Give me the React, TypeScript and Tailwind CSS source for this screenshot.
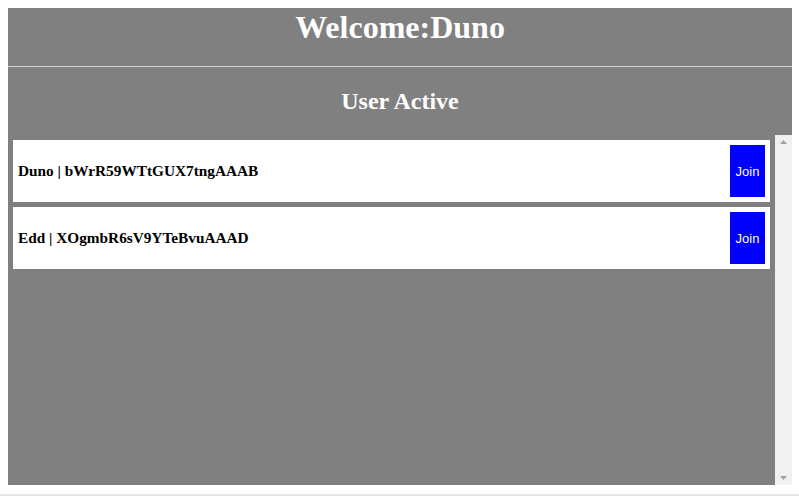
import * as React from "react";

const users = [
  { name: "Duno", id: "bWrR59WTtGUX7tngAAAB" },
  { name: "Edd", id: "XOgmbR6sV9YTeBvuAAAD" },
];

function Scrollbar() {
  return (
    <div className="flex w-[17px] shrink-0 flex-col items-center justify-between bg-[#f1f1f1] py-[5px]">
      <svg width="7" height="4" viewBox="0 0 7 4">
        <path d="M0 4 L3.5 0 L7 4 Z" fill="#a3a3a3" />
      </svg>
      <svg width="7" height="4" viewBox="0 0 7 4">
        <path d="M0 0 L3.5 4 L7 0 Z" fill="#a3a3a3" />
      </svg>
    </div>
  );
}

export default function App() {
  return (
    <div className="h-[496px] w-[799px] overflow-hidden bg-white font-['Liberation_Serif',serif]">
      <div className="ml-2 mt-2 flex h-[477px] w-[784px] flex-col bg-[#808080]">
        {/* header */}
        <div className="h-[59px] border-b border-[#d4d4d4]">
          <h1 className="pt-[1px] text-center text-[32px] font-bold leading-[36px] text-white">Welcome:Duno</h1>
        </div>
        <h2 className="h-[68px] pt-[21px] text-center text-[24px] font-bold leading-[27px] text-white">User Active</h2>

        {/* list */}
        <div className="flex h-[350px]">
          <div className="flex flex-1 flex-col gap-[5px] p-[5px]">
            {users.map((u) => (
              <div key={u.id} className="flex h-[62px] items-center justify-between bg-white p-[5px]">
                <span className="text-[15.3px] font-bold text-black">
                  {u.name} | {u.id}
                </span>
                <button className="h-[52px] w-[35px] bg-[#0000ff] pt-[1px] font-['Liberation_Sans',sans-serif] text-[13px] text-white">
                  Join
                </button>
              </div>
            ))}
          </div>
          <Scrollbar />
        </div>
      </div>
      <div className="mt-[9px] h-[2px] w-full bg-[#e6e6e6]" />
    </div>
  );
}
